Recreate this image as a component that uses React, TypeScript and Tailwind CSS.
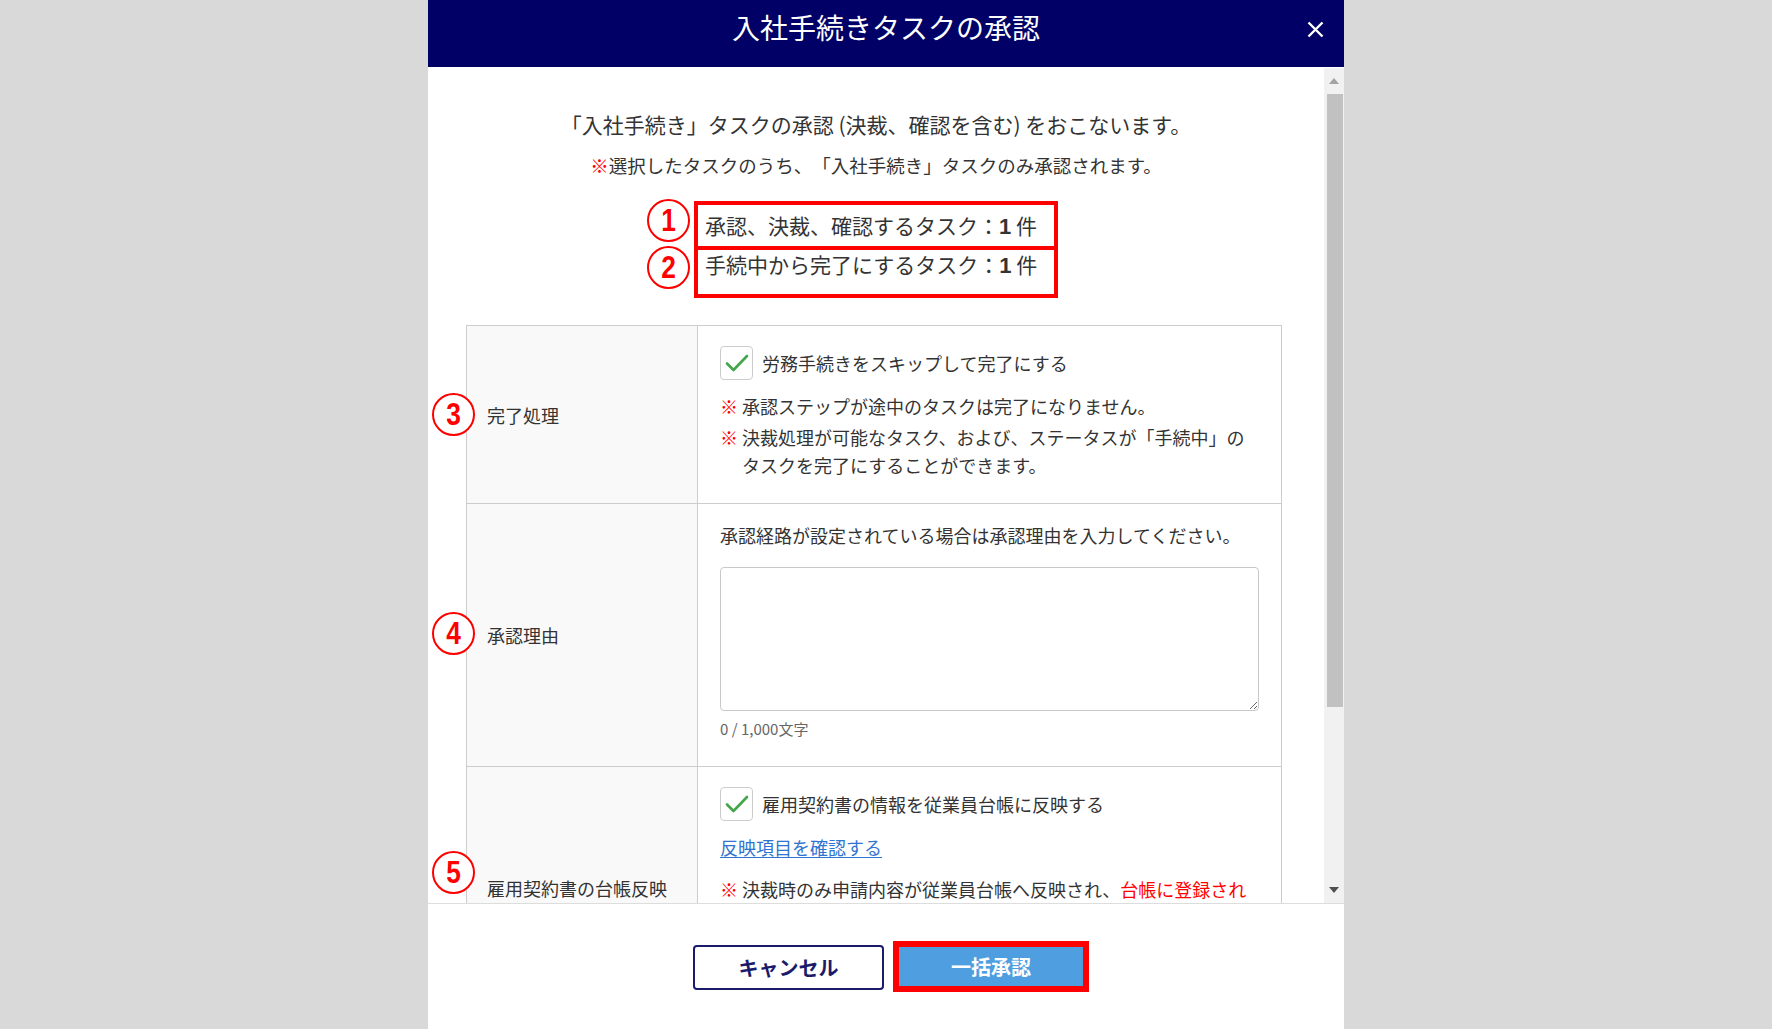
import React from "react";

const jp = "font-['Noto_Sans_CJK_JP','Noto_Sans',sans-serif]";

function Mark({ n, className }: { n: string; className: string }) {
  return (
    <span
      className={`absolute right-full flex h-[43px] w-[43px] items-center justify-center rounded-full border-2 border-[#ff0000] bg-white ${className}`}
    >
      <span className="scale-x-[0.85] font-['Liberation_Sans',sans-serif] text-[31px] font-bold leading-none text-[#ff0000]">
        {n}
      </span>
    </span>
  );
}

function Check() {
  return (
    <span className="flex h-[34px] w-[33px] shrink-0 items-center justify-center rounded-[4px] border border-[#cccccc] bg-white">
      <svg width="24" height="20" viewBox="0 0 24 20" fill="none">
        <path d="M2 10.5 L8.5 17 L22 3" stroke="#43a64a" strokeWidth="2.6" strokeLinecap="round" strokeLinejoin="round" />
      </svg>
    </span>
  );
}

function Note({ children }: { children: React.ReactNode }) {
  return (
    <div className="flex">
      <span className="w-[22px] shrink-0 text-[#ff0000]">※</span>
      <span>{children}</span>
    </div>
  );
}

export default function App() {
  return (
    <div className={`flex h-[1029px] w-full justify-center overflow-hidden bg-[#d9d9d9] text-[#333333] [text-spacing-trim:space-all] ${jp}`}>
      <div className="flex w-[916px] flex-col bg-white">
        <header className="relative flex h-[67px] shrink-0 items-center justify-center bg-[#000066] pb-[13px]">
          <h1 className="text-[28px] leading-[36px] text-white">入社手続きタスクの承認</h1>
          <button className="absolute right-[20px] top-[21px]">
            <svg width="17" height="17" viewBox="0 0 17 17">
              <path d="M1.5 1.5 L15.5 15.5 M15.5 1.5 L1.5 15.5" stroke="white" strokeWidth="2.4" />
            </svg>
          </button>
        </header>

        <div className="mt-[1px] flex h-[835px] shrink-0">
          <div className="flex-1 overflow-hidden">
            <div className="pt-[42px] text-center">
              <p className="text-[21px] leading-[28px]">
                「入社手続き」タスクの承認 (決裁、確認を含む) をおこないます。
              </p>
              <p className="mt-[13px] text-[18.5px] leading-[28px]">
                <span className="text-[#ff0000]">※</span>選択したタスクのうち、「入社手続き」タスクのみ承認されます。
              </p>
            </div>

            <div className="mt-[22px] flex flex-col items-center">
              <div className="relative flex h-[49px] w-[364px] items-center border-4 border-[#ff0000] pl-[7px]">
                <Mark n="1" className="top-[-6px] mr-[8px]" />
                <span className="text-[21px] leading-[28px]">
                  承認、決裁、確認するタスク：<b className="font-['Liberation_Sans',sans-serif] text-[22px]">1</b> 件
                </span>
              </div>
              <div className="relative h-[48px] w-[364px] border-4 border-t-0 border-[#ff0000] pl-[7px]">
                <Mark n="2" className="top-[-4px] mr-[8px]" />
                <span className="text-[21px] leading-[28px]">
                  手続中から完了にするタスク：<b className="font-['Liberation_Sans',sans-serif] text-[22px]">1</b> 件
                </span>
              </div>
            </div>

            <div className="ml-[38px] mt-[27px] grid w-[816px] grid-cols-[231px_1fr] border border-b-0 border-[#cccccc] text-[18px] leading-[28px]">
              <div className="flex items-center border-b border-r border-[#cccccc] bg-[#f9f9f9] pl-[20px]">
                <span className="relative">
                  <Mark n="3" className="top-[-8px] mr-[12px]" />
                  完了処理
                </span>
              </div>
              <div className="border-b border-[#cccccc] px-[22px] pb-[24px] pt-[20px]">
                <label className="flex items-center gap-[9px]">
                  <Check />
                  <span>労務手続きをスキップして完了にする</span>
                </label>
                <div className="mt-[12px] space-y-[3px]">
                  <Note>承認ステップが途中のタスクは完了になりません。</Note>
                  <Note>
                    決裁処理が可能なタスク、および、ステータスが「手続中」の
                    <br />
                    タスクを完了にすることができます。
                  </Note>
                </div>
              </div>

              <div className="flex items-center border-b border-r border-[#cccccc] bg-[#f9f9f9] pl-[20px]">
                <span className="relative">
                  <Mark n="4" className="top-[-9px] mr-[12px]" />
                  承認理由
                </span>
              </div>
              <div className="border-b border-[#cccccc] px-[22px] pb-[26px] pt-[17px]">
                <p>承認経路が設定されている場合は承認理由を入力してください。</p>
                <textarea className="mt-[18px] block h-[144px] w-full resize-y rounded-[4px] border border-[#c8c8c8] p-2 outline-none" />
                <p className="mt-[7px] text-[15px] leading-[22px] text-[#666666]">0 / 1,000文字</p>
              </div>

              <div className="flex min-h-[242px] items-center border-r border-[#cccccc] bg-[#f9f9f9] pl-[20px]">
                <span className="relative">
                  <Mark n="5" className="top-[-23px] mr-[12px]" />
                  雇用契約書の台帳反映
                </span>
              </div>
              <div className="px-[22px] pb-[22px] pt-[20px]">
                <label className="flex items-center gap-[9px]">
                  <Check />
                  <span>雇用契約書の情報を従業員台帳に反映する</span>
                </label>
                <a href="#" className="mt-[12px] inline-block text-[#2f74d0] underline underline-offset-2">
                  反映項目を確認する
                </a>
                <div className="mt-[14px]">
                  <Note>
                    決裁時のみ申請内容が従業員台帳へ反映され、
                    <span className="text-[#ff0000]">
                      台帳に登録され
                      <br />
                      ている情報は上書きされます。
                    </span>
                  </Note>
                </div>
              </div>
            </div>
          </div>

          <div className="flex w-[20px] shrink-0 flex-col bg-[#f1f1f1]">
            <div className="flex h-[26px] items-center justify-center">
              <svg width="10" height="6" viewBox="0 0 10 6">
                <path d="M5 0 L10 6 L0 6 Z" fill="#a3a3a3" />
              </svg>
            </div>
            <div className="ml-[3px] mr-[1px] h-[613px] bg-[#c1c1c1]" />
            <div className="flex-1" />
            <div className="flex h-[27px] items-center justify-center">
              <svg width="10" height="6" viewBox="0 0 10 6">
                <path d="M0 0 L10 0 L5 6 Z" fill="#505050" />
              </svg>
            </div>
          </div>
        </div>

        <footer className="flex flex-1 items-start justify-center gap-[9px] border-t border-[#dddddd] pl-[10px] pt-[37px]">
          <button className="mt-[4px] h-[45px] w-[191px] rounded-[4px] border-2 border-[#1b1b6b] bg-white text-[20px] font-bold text-[#1b1b6b]">
            キャンセル
          </button>
          <div className="border-[6px] border-[#ff0000]">
            <button className="block h-[39px] w-[184px] bg-[#4f9fe0] text-[20px] font-bold text-white">
              一括承認
            </button>
          </div>
        </footer>
      </div>
    </div>
  );
}
